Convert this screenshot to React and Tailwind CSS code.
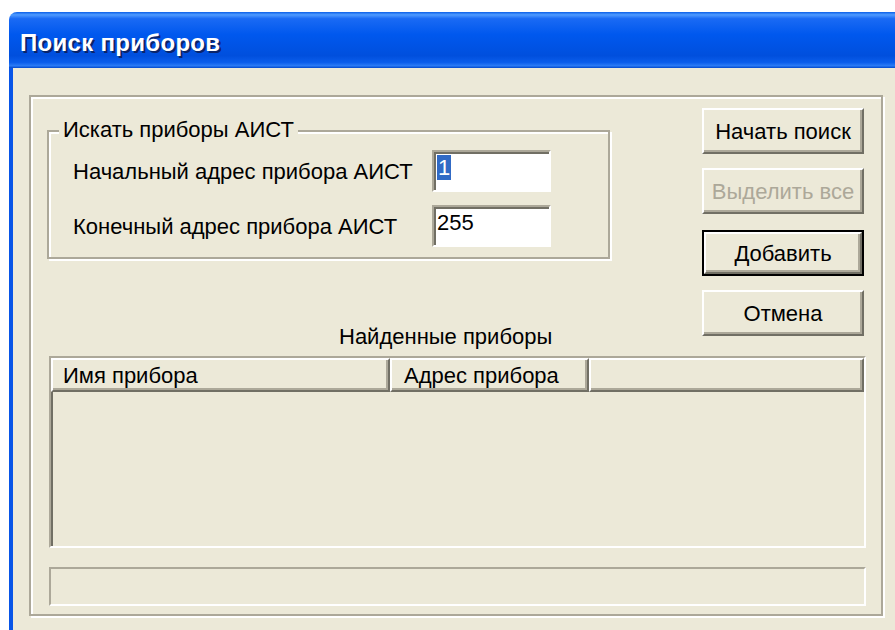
import React from 'react';

// Classic Win32 3D edges, doubled for the large dialog
const raised =
  'border-2 border-t-white border-l-white border-b-[#716F64] border-r-[#716F64] shadow-[inset_-2px_-2px_0_#ACA899]';
const sunken =
  'border-2 border-t-[#ACA899] border-l-[#ACA899] border-b-white border-r-white';
const etched = 'border-2 border-[#ACA899] shadow-[inset_2px_2px_0_#fff,2px_2px_0_#fff]';

function Button({ children, disabled, isDefault, className = '' }) {
  const face = (
    <div
      className={`${raised} flex-1 flex items-center justify-center bg-[#ECE9D8] ${
        disabled ? 'text-[#ACA899]' : 'text-black'
      }`}
    >
      {children}
    </div>
  );
  return (
    <div
      className={`w-[162px] h-[46px] flex ${isDefault ? 'border-2 border-black' : ''} ${className}`}
    >
      {face}
    </div>
  );
}

function Field({ label, children }) {
  return (
    <div className="flex items-center h-[42px]">
      <span className="w-[359px]">{label}</span>
      <div className={`${sunken} w-[119px] h-[42px] bg-white shadow-[inset_2px_2px_0_#716F64]`}>
        <div className="pl-[3px] pt-[3px] leading-[26px]">{children}</div>
      </div>
    </div>
  );
}

function HeaderCell({ children, className = '' }) {
  return (
    <div className={`${raised} h-full flex items-center ${className}`}>{children}</div>
  );
}

export default function App() {
  return (
    <div className="w-[895px] h-[630px] bg-white pt-[12px] pl-[9px] overflow-hidden font-['Liberation_Sans',Arial,sans-serif] text-[22px] text-black">
      <div className="h-full flex flex-col rounded-tl-[8px] overflow-hidden">
        {/* title bar */}
        <div className="h-[56px] shrink-0 flex items-center pl-[11px] pt-[5px] bg-[linear-gradient(to_bottom,#0A5FE8_0%,#4F9BFF_5%,#1A6AF4_12%,#0058EE_40%,#004FDD_78%,#0A5DEB_90%,#2B7BF6_96%,#0047CC_100%)]">
          <span className="text-white font-bold text-[24px] tracking-[0.3px] [text-shadow:2px_2px_0_#0A246A]">
            Поиск приборов
          </span>
        </div>

        {/* client area */}
        <div className="flex-1 border-l-4 border-[#0855E7] bg-[#ECE9D8] pl-[16px] pt-[27px]">
          <div className={`${etched} w-[854px] h-[521px] flex flex-col`}>
            <div className="flex h-[259px] shrink-0">
              <div className="w-[671px] pl-[16px] pt-[33px] flex flex-col">
                {/* group box */}
                <div className={`${etched} relative w-[563px] h-[129px] pl-[24px] pt-[18px] flex flex-col gap-[13px]`}>
                  <span className="absolute left-[10px] top-[-15px] px-[4px] bg-[#ECE9D8] leading-[26px]">
                    Искать приборы АИСТ
                  </span>
                  <Field label="Начальный адрес прибора АИСТ">
                    <span className="bg-[#316AC5] text-white px-[1px]">1</span>
                  </Field>
                  <Field label="Конечный адрес прибора АИСТ">255</Field>
                </div>
                <div className="mt-[66px] ml-[292px] leading-[24px]">Найденные приборы</div>
              </div>

              <div className="pt-[11px] flex flex-col">
                <Button>Начать поиск</Button>
                <Button disabled className="mt-[14px]">
                  Выделить все
                </Button>
                <Button isDefault className="mt-[16px]">
                  Добавить
                </Button>
                <Button className="mt-[14px]">Отмена</Button>
              </div>
            </div>

            {/* device list */}
            <div className={`${sunken} ml-[18px] w-[817px] h-[192px] flex flex-col shadow-[inset_2px_0_0_#716F64]`}>
              <div className="h-[34px] flex shrink-0">
                <HeaderCell className="w-[339px] pl-[10px]">Имя прибора</HeaderCell>
                <HeaderCell className="w-[199px] pl-[12px]">Адрес прибора</HeaderCell>
                <HeaderCell className="flex-1" />
              </div>
              <div className="flex-1" />
            </div>

            {/* status line */}
            <div className={`${sunken} ml-[18px] mt-[19px] w-[817px] h-[39px]`} />
          </div>
        </div>
      </div>
    </div>
  );
}
